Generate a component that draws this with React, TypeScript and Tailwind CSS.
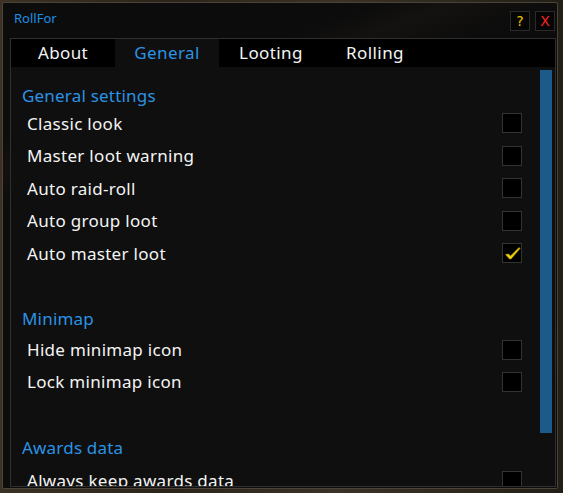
import React from "react";

const font = { fontFamily: '"Noto Sans", "Open Sans", sans-serif' };

function Check({ checked }: { checked?: boolean }) {
  return (
    <div className="w-[20px] h-[20px] border border-[#333333] bg-black flex items-center justify-center mr-[18px]">
      {checked && (
        <svg width="17" height="15" viewBox="0 0 17 15">
          <path d="M1.5 8.5 L4.5 8 L6.5 10 L15 1.5 L16 2.5 L7 13 L5.5 13 Z" fill="#f2d20a" stroke="#b89a00" strokeWidth="0.6" />
        </svg>
      )}
    </div>
  );
}

function Row({ label, checked, h = "h-[32.5px]" }: { label: string; checked?: boolean; h?: string }) {
  return (
    <div className={`flex items-center justify-between ${h} pl-[16px]`}>
      <span className="text-[17px] text-[#f4f4f4] tracking-[0.3px]">{label}</span>
      <Check checked={checked} />
    </div>
  );
}

function Header({ label }: { label: string }) {
  return (
    <div className="flex items-center h-[23px] pl-[11px] text-[17px] text-[#2b93e3] tracking-[0.2px]">{label}</div>
  );
}

export default function App() {
  const tabs = ["About", "General", "Looting", "Rolling"];
  return (
    <div
      className="w-[563px] h-[493px] overflow-hidden bg-[#1a1610] bg-[linear-gradient(90deg,#3b3224_0%,#2a241a_30%,#3a3226_60%,#231e16_100%)] pt-[2px] pl-[2px]"
      style={font}
    >
      <div className="w-[556px] h-[487px] border border-[#4a4438] rounded-[2px] bg-[#0c0c0c] bg-[linear-gradient(160deg,#0c0c0c_0%,#0c0c0c_20%,#141210_24%,#0c0c0c_30%,#0c0c0c_75%,#131210_80%,#0c0c0c_86%)] flex flex-col">
        <div className="h-[35px] flex items-center justify-between pl-[11px] pr-[2px] shrink-0">
          <span className="text-[13px] text-[#1e8fe6] mt-[-3px]">RollFor</span>
          <div className="flex gap-[5px] mt-[1px]">
            <div className="w-[20px] h-[20px] border border-[#2a2a2a] bg-[#050505] flex items-center justify-center text-[14px] text-[#e8c400] leading-none" style={{ fontFamily: '"DejaVu Sans", sans-serif' }}>?</div>
            <div className="w-[20px] h-[20px] border border-[#2a2a2a] bg-[#050505] flex items-center justify-center text-[14px] text-[#ff2020] leading-none" style={{ fontFamily: '"DejaVu Sans", sans-serif' }}>X</div>
          </div>
        </div>
        <div className="ml-[7px] mr-[1px] mb-[1px] flex-1 border border-[#2f2f2f] flex flex-col min-h-0 overflow-hidden">
          <div className="h-[28px] bg-black flex shrink-0">
            {tabs.map((t) => (
              <div
                key={t}
                className={`w-[104px] flex items-center justify-center text-[17px] tracking-[0.4px] ${t === "General" ? "bg-[#0f0f0f] text-[#2b93e3]" : "text-[#f4f4f4]"}`}
              >
                {t}
              </div>
            ))}
          </div>
          <div className="flex-1 bg-[#0f0f0f] flex min-h-0">
            <div className="flex-1 pt-[17px] overflow-hidden">
              <Header label="General settings" />
              <Row label="Classic look" />
              <Row label="Master loot warning" />
              <Row label="Auto raid-roll" />
              <Row label="Auto group loot" />
              <Row label="Auto master loot" checked />
              <div className="h-[38px]" />
              <Header label="Minimap" />
              <div className="h-[3.5px]" />
              <Row label="Hide minimap icon" h="h-[32px]" />
              <Row label="Lock minimap icon" h="h-[32px]" />
              <div className="h-[38.5px]" />
              <Header label="Awards data" />
              <div className="h-[5px]" />
              <Row label="Always keep awards data" h="h-[32px]" />
            </div>
            <div className="w-[15px] pt-[3px] pr-[3px] shrink-0">
              <div className="w-[12px] h-[363px] bg-[#1b5a8a]" />
            </div>
          </div>
        </div>
      </div>
    </div>
  );
}
